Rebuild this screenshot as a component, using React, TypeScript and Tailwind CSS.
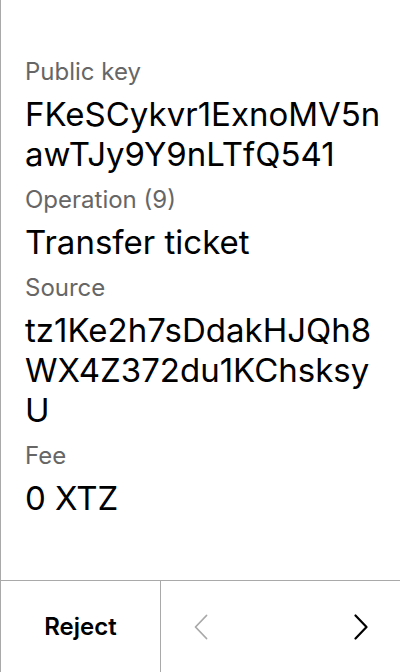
const fields = [
  { label: 'Public key', value: 'FKeSCykvr1ExnoMV5nawTJy9Y9nLTfQ541' },
  { label: 'Operation (9)', value: 'Transfer ticket' },
  { label: 'Source', value: 'tz1Ke2h7sDdakHJQh8WX4Z372du1KChsksyU' },
  { label: 'Fee', value: '0 XTZ' },
]

function Chevron({ dir, className }: { dir: 'left' | 'right'; className: string }) {
  return (
    <svg width="14" height="26" viewBox="0 0 14 26" fill="none" className={className}>
      <path
        d={dir === 'right' ? 'M1.5 1.5 L12.5 13 L1.5 24.5' : 'M12.5 1.5 L1.5 13 L12.5 24.5'}
        stroke="currentColor"
        strokeWidth={dir === 'right' ? 2.2 : 1.8}
        strokeLinecap="round"
        strokeLinejoin="round"
      />
    </svg>
  )
}

export default function App() {
  return (
    <div
      className="h-[672px] w-[400px] flex flex-col bg-white border-l border-[#a9a9a9]"
      style={{ fontFamily: 'Inter, "Noto Sans", sans-serif' }}
    >
      <div className="flex-1 pt-14 pl-6 pr-2">
        {fields.map((f) => (
          <div key={f.label} className="mb-[10px]">
            <div className="text-[24px] leading-8 text-[#666666] mb-[6px]">{f.label}</div>
            <div className="text-[33px] leading-10 text-black break-all">{f.value}</div>
          </div>
        ))}
      </div>

      {/* Footer actions */}
      <div className="h-[92px] flex border-t border-[#a9a9a9]">
        <button className="w-[160px] flex items-center justify-center text-[24px] font-semibold text-black border-r border-[#a9a9a9]">
          Reject
        </button>
        <div className="flex-1 flex items-center justify-between pl-[33px] pr-[32px]">
          <Chevron dir="left" className="text-[#a9a9a9]" />
          <Chevron dir="right" className="text-black" />
        </div>
      </div>
    </div>
  )
}
